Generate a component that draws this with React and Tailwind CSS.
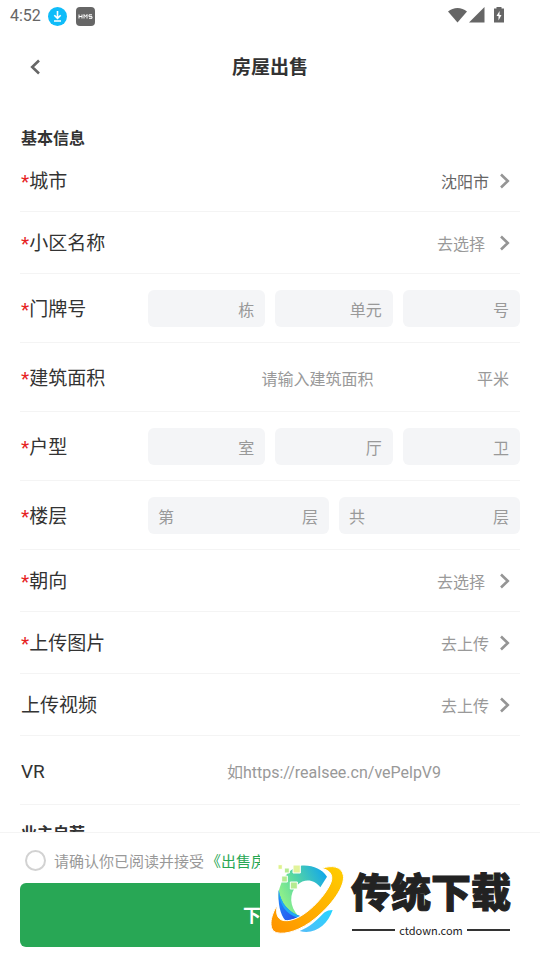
import React from "react";

function Chevron() {
  return (
    <svg width="10" height="16" viewBox="0 0 10 16" fill="none" stroke="#959595" strokeWidth="2.6" aria-hidden="true">
      <path d="M1 1.5 7.8 8 1 14.5" />
    </svg>
  );
}

function Label({ children, required, htmlFor }) {
  const Tag = htmlFor ? "label" : "span";
  return (
    <Tag htmlFor={htmlFor} className="w-32 shrink-0 pl-px pt-[3px] text-left text-[19px] leading-7 text-[#333]">
      {required && <span className="text-[#e62222]">*</span>}
      {children}
    </Tag>
  );
}

function LinkRow({ label, value, required = true, chosen, wide }) {
  return (
    <button type="button" className="flex h-[62px] w-full items-center border-b border-[#f4f4f4] pr-2.5">
      <Label required={required}>{label}</Label>
      <span className={`ml-auto pt-1 text-base ${chosen ? "text-[#666]" : "text-[#999]"} ${wide ? "mr-[15px]" : "mr-[11px]"}`}>
        {value}
      </span>
      <Chevron />
    </button>
  );
}

function FieldRow({ children }) {
  return <div className="flex h-[69px] items-center border-b border-[#f4f4f4]">{children}</div>;
}

function UnitBox({ prefix, unit, name }) {
  return (
    <label className="flex h-[37px] min-w-0 flex-1 items-center rounded-md bg-[#f4f5f7] pl-2.5 pr-[11px] pt-1.5 text-base text-[#999]">
      {prefix && <span>{prefix}</span>}
      <input type="text" aria-label={name} className="w-0 min-w-0 flex-1 bg-transparent text-right outline-none" />
      <span>{unit}</span>
    </label>
  );
}

function BoxRow({ label, boxes }) {
  return (
    <FieldRow>
      <Label required>{label}</Label>
      <div className="flex min-w-0 flex-1 gap-2.5">
        {boxes.map((b) => (
          <UnitBox key={b.name} {...b} />
        ))}
      </div>
    </FieldRow>
  );
}

function StatusBar() {
  return (
    <div className="flex h-8 shrink-0 items-center pl-2.5 pr-[35px] text-[#666]">
      <span className="text-base">4:52</span>
      <svg className="ml-[7px]" width="19" height="19" viewBox="0 0 19 19" aria-hidden="true">
        <circle cx="9.5" cy="9.5" r="9.5" fill="#0fbcf9" />
        <path d="M9.5 4v7M6.3 8.2l3.2 3.2 3.2-3.2M6 14h7" fill="none" stroke="#fff" strokeWidth="1.6" />
      </svg>
      <svg className="ml-[9px]" width="19" height="19" viewBox="0 0 19 19" aria-hidden="true">
        <rect width="19" height="19" rx="4" fill="#666" />
        <path
          d="M3 7.5v4M6 7.5v4M3 9.5h3M8 11.5v-4l1.5 2 1.5-2v4M16 7.8h-3v1.8h3v1.7h-3"
          fill="none"
          stroke="#fff"
          strokeWidth="1"
        />
      </svg>
      <svg className="ml-auto" width="57" height="20" viewBox="0 -2 57 20" fill="#666" aria-hidden="true">
        <path d="M0 3.600C5.500-1.200 13.500-1.200 19 3.600L9.500 14.500Z" />
        <path d="M36.500-1v15.500H21Z" />
        <path d="M48.500-1h5v1.500H56V14.500H46V.500h2.500Z" />
        <path d="M51.600 3 48.500 8h2v4.500l3-5.500h-2Z" fill="#fff" />
      </svg>
    </div>
  );
}

function Logo() {
  return (
    <svg className="shrink-0" width="77" height="74" viewBox="25 128 231 222" aria-hidden="true">
      <defs>
        <linearGradient id="arc" x1="0" y1=".5" x2="1" y2="0">
          <stop offset="0" stopColor="#8ff08a" />
          <stop offset=".35" stopColor="#59d8a0" />
          <stop offset="1" stopColor="#08a0f5" />
        </linearGradient>
        <linearGradient id="ring" x1="0" y1="1" x2="1" y2="0">
          <stop offset="0" stopColor="#ff9200" />
          <stop offset="1" stopColor="#ffce00" />
        </linearGradient>
        <linearGradient id="tail" x1="0" y1="1" x2="1" y2="0">
          <stop offset="0" stopColor="#55bdf8" />
          <stop offset="1" stopColor="#25d4ff" />
        </linearGradient>
        <linearGradient id="deep" x1="0" y1="0" x2="1" y2="1">
          <stop offset="0" stopColor="#2090ff" />
          <stop offset="1" stopColor="#2848e8" />
        </linearGradient>
      </defs>
      <path d="M120 139C155 136 183 148 199 172L179 204C162 181 132 176 110 197C84 222 86 262 114 291L102 294C63 280 45 243 57 205C68 169 91 145 120 139Z" fill="url(#arc)" />
      <path d="M54 211C60 252 84 279 120 291C105 299 91 304 75 304C58 287 51 249 54 211Z" fill="url(#deep)" />
      <path d="M54 211C60 252 84 279 120 291L112 295C78 284 57 262 54 211Z" fill="#20a9f6" />
      <path d="M183 147C213 137 243 140 248 168C254 202 211 259 163 298C120 333 75 347 48 340C23 333 27 293 50 257C43 288 53 306 80 304C125 301 182 245 206 200C222 171 211 153 183 147Z" fill="url(#ring)" stroke="#fff" strokeWidth="3" />
      <path d="M216 272C201 317 162 347 117 335C148 322 168 303 190 280C198 274 207 272 216 272Z" fill="url(#tail)" />
      <g fill="#b5eb91" stroke="#fff" strokeWidth="3">
        <path d="M52 136h13v14H52Z" fill="#dff28e" />
        <path d="M71 146h15v15H71Z" />
        <path d="M97 137h22v24H97Z" fill="#e1f39a" />
        <path d="M63 170h17v18H63Z" />
        <path d="M89 188h21v21H89Z" />
      </g>
    </svg>
  );
}

function Brand() {
  return (
    <div className="absolute bottom-0 left-[260px] right-0 top-px flex items-start bg-white pl-[9px] pt-7">
      <Logo />
      <div className="ml-1.5 w-[158px] shrink-0 text-[#222]">
        <div className="flex justify-center whitespace-nowrap font-['Noto_Sans_CJK_SC',sans-serif] text-[40px] font-black leading-[56px] [-webkit-text-stroke:1px_#222]">
          传统下载
        </div>
        <div className="mt-1 flex items-center gap-1 font-['Noto_Sans_CJK_SC',sans-serif] text-[11px] leading-4">
          <span className="h-0.5 flex-1 bg-[#333]" />
          ctdown.com
          <span className="h-0.5 flex-1 bg-[#333]" />
        </div>
      </div>
    </div>
  );
}

export default function App() {
  return (
    <div className="flex h-screen flex-col overflow-hidden bg-white font-[Roboto,'Noto_Sans_CJK_SC',sans-serif] text-[#333]">
      <StatusBar />
      <header className="relative flex h-[70px] shrink-0 items-center justify-center">
        <button type="button" aria-label="返回" className="absolute left-[19px] flex h-8 w-8 items-center justify-center">
          <svg width="10" height="16" viewBox="0 0 10 16" fill="none" stroke="#666" strokeWidth="2.6" aria-hidden="true">
            <path d="M9 1.500 2.200 8 9 14.500" />
          </svg>
        </button>
        <h1 className="pt-0.5 text-[19px] font-bold">房屋出售</h1>
      </header>

      <main className="min-h-0 flex-1 overflow-hidden px-5 pt-6">
        <h2 className="pl-px pt-0.5 text-base font-bold leading-[22px]">基本信息</h2>
        <LinkRow label="城市" value="沈阳市" chosen />
        <LinkRow label="小区名称" value="去选择" wide />
        <BoxRow
          label="门牌号"
          boxes={[{ name: "楼栋", unit: "栋" }, { name: "单元", unit: "单元" }, { name: "房号", unit: "号" }]}
        />
        <FieldRow>
          <Label required htmlFor="area">建筑面积</Label>
          <input
            id="area"
            type="text"
            placeholder="请输入建筑面积"
            className="ml-2.5 min-w-0 flex-1 pt-1.5 text-center text-base outline-none placeholder:text-[#999]"
          />
          <span className="mr-[11px] pt-1.5 text-base text-[#999]">平米</span>
        </FieldRow>
        <BoxRow
          label="户型"
          boxes={[{ name: "卧室", unit: "室" }, { name: "客厅", unit: "厅" }, { name: "卫生间", unit: "卫" }]}
        />
        <BoxRow
          label="楼层"
          boxes={[{ name: "所在楼层", prefix: "第", unit: "层" }, { name: "总楼层", prefix: "共", unit: "层" }]}
        />
        <LinkRow label="朝向" value="去选择" wide />
        <LinkRow label="上传图片" value="去上传" />
        <LinkRow label="上传视频" value="去上传" required={false} />
        <FieldRow>
          <Label htmlFor="vr">VR</Label>
          <input
            id="vr"
            type="text"
            placeholder="如https://realsee.cn/vePelpV9"
            className="min-w-0 flex-1 pt-1.5 text-center text-base outline-none placeholder:text-[#999]"
          />
        </FieldRow>
        <h2 className="pl-px pt-[18px] text-base font-bold leading-[22px]">业主自荐</h2>
      </main>

      <footer className="relative shrink-0 border-t border-[#f4f4f4] bg-white px-5 pb-[13px] pt-4">
        <div className="flex h-[22px] items-center whitespace-nowrap pl-[5px] text-[15px]">
          <input
            id="agree"
            type="checkbox"
            className="mr-2 h-[21px] w-[21px] shrink-0 appearance-none rounded-full border-2 border-[#d2d2d2] checked:bg-[#28a755]"
          />
          <label htmlFor="agree" className="pt-1 text-[#999]">请确认你已阅读并接受</label>
          <a href="#terms" className="pl-0.5 pt-1 text-[#28a755]">《出售房</a>
        </div>
        <button type="button" className="mt-3 h-16 w-full rounded-md bg-[#28a755] pt-0.5 text-lg font-bold text-white">
          下一步
        </button>
        <Brand />
      </footer>
    </div>
  );
}
